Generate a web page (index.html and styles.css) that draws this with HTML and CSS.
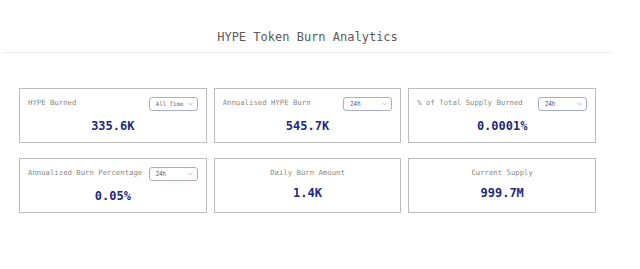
FILE: index.html
```html
<!DOCTYPE html>
<html lang="en">
<head>
  <meta charset="UTF-8" />
  <meta name="viewport" content="width=device-width, initial-scale=1.0" />
  <title>HYPE Token Burn Analytics</title>
  <link rel="stylesheet" href="styles.css">
</head>
<body>

  <div class="page">
    <div class="header">
      <h1>HYPE Token Burn Analytics</h1>
    </div>

    <div class="stats">
      <div class="stat-card">
        <div class="stat-head">
          <span class="stat-label">HYPE Burned</span>
          <div class="range-select mono">All Time
            <svg class="chevron" viewBox="0 0 8 5"><path d="M1 1l3 3 3-3" /></svg>
          </div>
        </div>
        <div class="stat-value">335.6K</div>
      </div>

      <div class="stat-card">
        <div class="stat-head">
          <span class="stat-label">Annualised HYPE Burn</span>
          <div class="range-select">24h
            <svg class="chevron" viewBox="0 0 8 5"><path d="M1 1l3 3 3-3" /></svg>
          </div>
        </div>
        <div class="stat-value">545.7K</div>
      </div>

      <div class="stat-card">
        <div class="stat-head">
          <span class="stat-label">% of Total Supply Burned</span>
          <div class="range-select">24h
            <svg class="chevron" viewBox="0 0 8 5"><path d="M1 1l3 3 3-3" /></svg>
          </div>
        </div>
        <div class="stat-value">0.0001%</div>
      </div>

      <div class="stat-card">
        <div class="stat-head">
          <span class="stat-label">Annualized Burn Percentage</span>
          <div class="range-select">24h
            <svg class="chevron" viewBox="0 0 8 5"><path d="M1 1l3 3 3-3" /></svg>
          </div>
        </div>
        <div class="stat-value">0.05%</div>
      </div>

      <div class="stat-card">
        <div class="stat-head centered">
          <span class="stat-label">Daily Burn Amount</span>
        </div>
        <div class="stat-value">1.4K</div>
      </div>

      <div class="stat-card">
        <div class="stat-head centered">
          <span class="stat-label">Current Supply</span>
        </div>
        <div class="stat-value">999.7M</div>
      </div>
    </div>
  </div>

</body>
</html>
```

FILE: styles.css
```css
body {
  margin: 0;
  background: #ffffff;
  font-family: 'DejaVu Sans Mono', 'Liberation Mono', monospace;
  color: #333333;
}

.page {
  width: 609px;
  margin-left: 3px;
}

.header {
  padding: 29px 0 7px;
  border-bottom: 1px solid #ececec;
  text-align: center;
}

.header h1 {
  margin: 0;
  font-size: 12px;
  line-height: 16px;
  font-weight: normal;
  color: #5a5a5a;
}

.stats {
  display: grid;
  grid-template-columns: repeat(3, 1fr);
  column-gap: 7px;
  row-gap: 15px;
  padding: 35px 16px 0;
}

.stat-card {
  border: 1px solid #bcbcbc;
  padding: 8px;
}

.stat-head {
  display: flex;
  justify-content: space-between;
  align-items: flex-start;
}

.stat-head.centered {
  justify-content: center;
}

.stat-label {
  font-size: 7.3px;
  line-height: 11px;
  color: #888888;
}

.range-select {
  display: flex;
  align-items: center;
  justify-content: space-between;
  box-sizing: border-box;
  width: 49px;
  height: 14px;
  padding: 0 4px 0 6px;
  border: 1px solid #a7acd4;
  border-radius: 3px;
  font-family: 'Inter', 'Liberation Sans', sans-serif;
  font-size: 5.5px;
  color: #444a78;
}

.range-select.mono {
  font-family: 'DejaVu Sans Mono', 'Liberation Mono', monospace;
  font-size: 5.8px;
  color: #666a88;
}

.chevron {
  width: 5px;
  height: 4px;
  fill: none;
  stroke: #8a90b0;
  stroke-width: 1;
}

.stat-value {
  margin-top: 7px;
  font-size: 12px;
  line-height: 16px;
  font-weight: bold;
  text-align: center;
  color: #232a78;
}
```
